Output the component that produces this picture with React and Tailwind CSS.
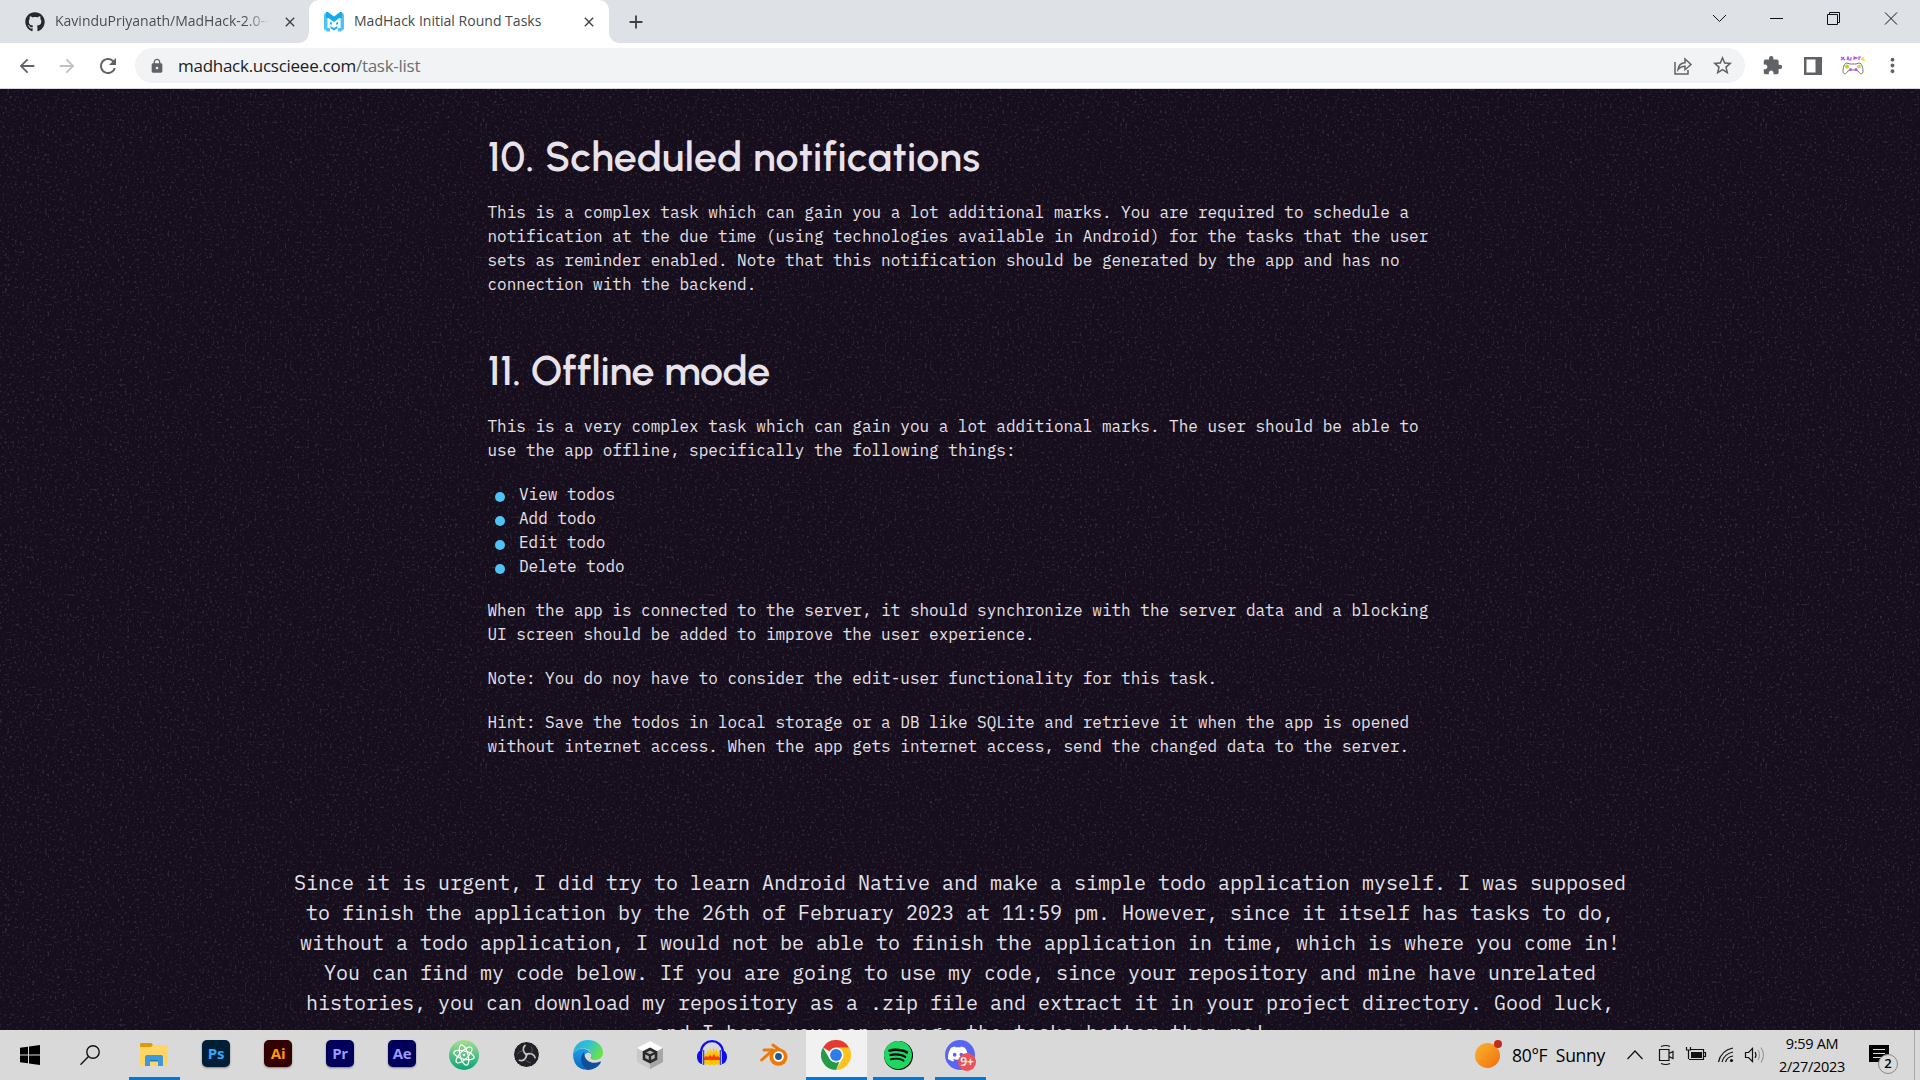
import React from "react";
import { FaGithub } from "react-icons/fa";
import { SiSpotify, SiDiscord } from "react-icons/si";
import { MdArrowBack, MdArrowForward, MdRefresh, MdLock, MdStarBorder, MdExtension, MdMoreVert, MdClose, MdAdd } from "react-icons/md";

const UI = "font-['Open_Sans','Noto_Sans',sans-serif]";

function MadHackLogo() {
  return (
    <svg viewBox="0 0 20 20" className="h-5 w-5 shrink-0">
      <path d="M1 1h4v5H3.500v10H6v3.500H3L0 17V3z" fill="#4fc3f7" />
      <path d="M19 1h-4v5h1.500v10H14v3.500h3l3-2.500V3z" fill="#4fc3f7" />
      <path d="M2 0h2l6 4.500L16 0h2v6h-2.500L10 10 4.500 6H2z" fill="#12aeea" />
      <path d="M6 9.500l2 1.500v1.500H6zM14 9.500L12 11v1.500h2zM6.500 14L10 16l3.500-2v2.200L10 18.500l-3.500-2.300z" fill="#1fb2ee" />
    </svg>
  );
}

function ShareIcon() {
  return (
    <svg viewBox="0 0 20 20" className="h-5 w-5" fill="none" stroke="#5f6368" strokeWidth="1.5">
      <path d="M2 6v12h13v-4" />
      <path d="M5 13.500c.5-4 3-6.500 7-6.700V3l6 5.500-6 5.200v-3.500c-3 0-5 .8-7 3.300z" />
    </svg>
  );
}

function Controller() {
  return (
    <svg viewBox="0 0 26 20" className="h-5 w-[26px]">
      <path d="M1 4l3-3M1 1l4 3M7 4l1-3 1 3h2V1M14 4V1l3 1-3 1M19 4V1h2" stroke="#b44cf0" strokeWidth="1.200" fill="none" />
      <path d="M21 3l2-1v2h2" stroke="#d8e84a" strokeWidth="1.500" fill="none" />
      <path d="M7 7l3 1h6l3-1c3 0 4 5 4 9-1 3-3 2-5-1l-2-1h-6l-2 1c-2 3-4 4-5 1 0-4 1-9 4-9z" fill="#fff" stroke="#777" />
      <circle cx="7" cy="10.500" r="2" fill="#b6d900" />
      <circle cx="19" cy="10.500" r="2" fill="#c8d86a" />
      <circle cx="10.500" cy="13.500" r="1.500" fill="#c94ff0" />
      <circle cx="16" cy="13.500" r="1.500" fill="#c94ff0" />
    </svg>
  );
}

function TabStrip() {
  return (
    <div className={`flex h-[43px] bg-[#dee1e6] ${UI}`}>
      <div className="flex w-[309px] items-center pl-[25px]">
        <FaGithub className="h-5 w-5 shrink-0 text-[#24292f]" />
        <span className="mb-[2px] ml-[10px] w-[215px] overflow-hidden whitespace-nowrap bg-gradient-to-r from-[#45494d] from-88% to-[#dee1e6] bg-clip-text text-[14px] tracking-[0px] text-transparent">KavinduPriyanath/MadHack-2.0--</span>
        <MdClose className="ml-[12px] h-4 w-4 shrink-0 text-[#3c4043]" />
      </div>
      <div className="relative flex w-[300px] items-center rounded-t-[10px] bg-white pl-[15px]">
        <div className="absolute bottom-0 -left-[10px] h-[10px] w-[10px] bg-[radial-gradient(circle_at_0_0,#dee1e6_9.5px,white_10px)]" />
        <div className="absolute bottom-0 -right-[10px] h-[10px] w-[10px] bg-[radial-gradient(circle_at_100%_0,#dee1e6_9.5px,white_10px)]" />
        <MadHackLogo />
        <span className="mb-[2px] ml-[10px] w-[227px] whitespace-nowrap text-[14px] tracking-[0.02px] text-[#45494d]">MadHack Initial Round Tasks</span>
        <MdClose className="h-4 w-4 shrink-0 text-[#3c4043]" />
      </div>
      <div className="flex flex-1 items-center pl-[16px]">
        <MdAdd className="h-[22px] w-[22px] text-[#3c4043]" />
      </div>
      <svg viewBox="0 0 220 43" className="h-[43px] w-[220px]" fill="none" stroke="#111" strokeWidth="1">
        <path d="M13 15l6.500 6.500L26 15" />
        <path d="M70 18.500h13M127.500 14.500h10v10h-10zM129.500 14.500v-2h10v10h-2M185 12.500l12 12M197 12.500l-12 12" />
      </svg>
    </div>
  );
}

function Toolbar() {
  return (
    <div className={`flex h-[46px] items-center border-b border-[#d5d7da] bg-white text-[#5f6368] ${UI}`}>
      <div className="flex w-[135px] items-center gap-[18px] pl-4">
        <MdArrowBack className="h-[22px] w-[22px]" />
        <MdArrowForward className="h-[22px] w-[22px] text-[#bdc1c6]" />
        <MdRefresh className="h-[24px] w-[24px]" />
      </div>
      <div className="flex h-[35px] w-[1610px] items-center rounded-full bg-[#f1f3f4] pl-[14px]">
        <MdLock className="h-4 w-4" />
        <span className="ml-[13px] flex-1 text-[17px] tracking-[-0.27px] text-[#202124]">madhack.ucscieee.com<span className="text-[#6b6f73]">/task-list</span></span>
        <ShareIcon />
        <MdStarBorder className="mr-[11px] ml-[18px] h-[23px] w-[23px]" />
      </div>
      <div className="flex flex-1 items-center pl-[17px]">
        <MdExtension className="h-[21px] w-[21px]" />
        <svg viewBox="0 0 18 18" className="ml-[21px] h-[18px] w-[18px]"><path d="M0 0h18v18H0zM2.500 2.500v13h9v-13z" fill="#5f6368" fillRule="evenodd" /></svg>
        <span className="ml-[18px]"><Controller /></span>
        <MdMoreVert className="ml-[15px] h-[23px] w-[23px]" />
      </div>
    </div>
  );
}

function Noise() {
  return (
    <svg className="pointer-events-none absolute inset-0 h-full w-full opacity-20">
      <filter id="grain">
        <feTurbulence type="fractalNoise" baseFrequency="0.4" numOctaves="3" seed="4" />
        <feColorMatrix values="0 0 0 0 .4  0 0 0 0 .4  0 0 0 0 .45  4 0 0 0 -2.3" />
      </filter>
      <rect width="100%" height="100%" filter="url(#grain)" />
    </svg>
  );
}

const Heading = ({ children, tracking = "tracking-[0.45px]" }) => (
  <h2 className={`h-[48px] whitespace-nowrap font-['Gilroy','Urbanist','Inter',sans-serif] text-[41px] leading-[48px] font-[650] text-[#e8e2ea] ${tracking}`}>{children}</h2>
);

const Lines = ({ rows }) => (
  <p>{rows.map((r) => <span key={r} className="block whitespace-nowrap">{r}</span>)}</p>
);

function Page() {
  return (
    <main className="relative h-[941px] overflow-hidden bg-[#160e1c] font-['IBM_Plex_Mono','Liberation_Mono',monospace] text-[#e6e1e9]">
      <Noise />
      <div className="relative ml-[487.5px] flex w-[945px] flex-col text-[16px] leading-6">
        <div className="mt-[44px]"><Heading>10. Scheduled notifications</Heading></div>
        <div className="mt-[19px]">
          <Lines rows={[
            "This is a complex task which can gain you a lot additional marks. You are required to schedule a",
            "notification at the due time (using technologies available in Android) for the tasks that the user",
            "sets as reminder enabled. Note that this notification should be generated by the app and has no",
            "connection with the backend.",
          ]} />
        </div>
        <div className="mt-[51px]"><Heading tracking="tracking-[-0.1px]">11. Offline mode</Heading></div>
        <div className="mt-[19px] flex flex-col gap-5">
          <Lines rows={[
            "This is a very complex task which can gain you a lot additional marks. The user should be able to",
            "use the app offline, specifically the following things:",
          ]} />
          <ul>
            {["View todos", "Add todo", "Edit todo", "Delete todo"].map((t) => (
              <li key={t} className="flex h-6 items-center pl-[7.5px]">
                <span className="mt-[5px] mr-[14px] h-[10px] w-[10px] rounded-full bg-[#4fc3f7]" />{t}
              </li>
            ))}
          </ul>
          <Lines rows={[
            "When the app is connected to the server, it should synchronize with the server data and a blocking",
            "UI screen should be added to improve the user experience.",
          ]} />
          <Lines rows={["Note: You do noy have to consider the edit-user functionality for this task."]} />
          <Lines rows={[
            "Hint: Save the todos in local storage or a DB like SQLite and retrieve it when the app is opened",
            "without internet access. When the app gets internet access, send the changed data to the server.",
          ]} />
        </div>
      </div>
      <div className="relative mt-[110px] text-center text-[20px] leading-[30px]">
        <Lines rows={[
          "Since it is urgent, I did try to learn Android Native and make a simple todo application myself. I was supposed",
          "to finish the application by the 26th of February 2023 at 11:59 pm. However, since it itself has tasks to do,",
          "without a todo application, I would not be able to finish the application in time, which is where you come in!",
          "You can find my code below. If you are going to use my code, since your repository and mine have unrelated",
          "histories, you can download my repository as a .zip file and extract it in your project directory. Good luck,",
          "and I hope you can manage the tasks better than me!",
        ]} />
      </div>
    </main>
  );
}

const Adobe = ({ label, box, text }) => (
  <div className={`mb-[3px] flex h-[27px] w-[28px] items-center justify-center rounded-[5px] pb-px text-[15px] font-bold tracking-[-0.3px] shadow-[0_1px_2px_rgba(0,0,0,.4)] ${box} ${text}`}>{label}</div>
);

function Explorer() {
  return (
    <svg viewBox="0 0 28 24" className="mb-px h-6 w-7">
      <path d="M0 1.500Q0 0 1.500 0h10L13 2l-1 3H0z" fill="#dd9a06" />
      <path d="M13 2h13q1.500 0 1.500 1.500V22H0V4h11z" fill="#ffd564" />
      <path d="M5 23V14q0-2 2-2h14q2 0 2 2v9h-5v-6h-8v6z" fill="#3f98dc" />
      <path d="M10 17h8v1.500h-8z" fill="#2478bd" />
    </svg>
  );
}

function Atom() {
  return (
    <svg viewBox="0 0 30 30" className="h-[30px] w-[30px]" fill="none" stroke="#fff" strokeWidth="1.200">
      <defs><linearGradient id="at" x1="0" y1="0" x2="0" y2="1"><stop offset="0" stopColor="#aade90" /><stop offset="1" stopColor="#07a477" /></linearGradient></defs>
      <circle cx="15" cy="15" r="15" fill="url(#at)" stroke="none" />
      <ellipse cx="15" cy="15" rx="10.500" ry="4" transform="rotate(15 15 15)" />
      <ellipse cx="15" cy="15" rx="10.500" ry="4" transform="rotate(75 15 15)" />
      <ellipse cx="15" cy="15" rx="10.500" ry="4" transform="rotate(135 15 15)" />
      <circle cx="15" cy="15" r="1.300" fill="#fff" stroke="none" />
    </svg>
  );
}

function Obs() {
  const blade = "M13.500 14C10 11 9 7 12 4.500";
  return (
    <svg viewBox="0 0 27 27" className="mb-px h-[27px] w-[27px]" fill="none" stroke="#c9c9cb" strokeLinecap="round">
      <circle cx="13.500" cy="13.500" r="13" fill="#232125" stroke="#f0f0f0" />
      {["rotate(0 13.5 13.5)", "rotate(120 13.5 13.5)", "rotate(240 13.5 13.5)"].map((r) => (
        <g key={r} transform={r}>
          <path d={blade} strokeWidth="1.700" />
          <path d="M10.500 10C8 9.500 5.500 11 4.500 13" strokeWidth="0.600" stroke="#77757a" />
        </g>
      ))}
    </svg>
  );
}

function Edge() {
  return (
    <svg viewBox="0 0 30 30" className="h-[30px] w-[30px]">
      <defs>
        <linearGradient id="eg1" x1="0" y1="0" x2="1" y2=".4"><stop offset="0" stopColor="#2aa9e0" /><stop offset=".5" stopColor="#2fc0d8" /><stop offset="1" stopColor="#6be04f" /></linearGradient>
        <linearGradient id="eg2" x1="0" y1="0" x2="0" y2="1"><stop offset="0" stopColor="#1f9de3" /><stop offset="1" stopColor="#0b67c0" /></linearGradient>
      </defs>
      <path d="M0 14C1 5 7 0 15 0c9 0 15 6 15 12.500 0 5-4 7.500-8 7.500-3 0-5-1-4.500-2.500C19 16 18.500 10 12 8.500 6 8 2 10 0 14z" fill="url(#eg1)" />
      <path d="M0 14C2 10 7 8 12 9c3.500 1 6 3.500 6.200 5.500-1.200-2-4.500-2.500-6.200 0-3 5 1 12 8 13.500C12 32 0 29 0 14z" fill="url(#eg2)" />
      <path d="M11 12c-4 4-4.500 12 3 17.900C20 30 25 27.500 27.800 22.500c.4-1-.3-1.200-1-.8C19 25 11 21 11 12z" fill="#104f9a" />
    </svg>
  );
}

function Audacity() {
  return (
    <svg viewBox="0 0 30 27" className="h-[27px] w-[30px]">
      <path d="M7 17l1-5 1 3 2-6 1 5 1.500-6 1.500 6 1.500-7 1.500 6 1.500-5 1 5 1-2 1.500 6v6l-2 2-2-1-2 2-2-2-2 2-2-2-2 1-2-2z" fill="#ffc400" />
      <path d="M7 18l2-2 2 1 2-2 2 2 2-3 2 3 2-1 2 2v2H7z" fill="#ff3b00" />
      <path d="M4 12C5-2.500 25-2.500 26 12" fill="none" stroke="#0b10e8" strokeWidth="2.200" />
      <path d="M5 10C1 11 0 14 0 17s2 7 5 7zM25 10c4 1 5 4 5 7s-2 7-5 7z" fill="#0b10e8" />
      <path d="M6.500 10v15M23.500 10v15" stroke="#3949d6" strokeWidth="1.500" />
    </svg>
  );
}

function Chrome() {
  return (
    <svg viewBox="0 0 30 30" className="mr-px h-[30px] w-[30px]">
      <path d="M15 15L2 7.500A15 15 0 0 1 28 7.500z" fill="#e33b2e" />
      <path d="M15 7.500H28A15 15 0 0 1 15 30l6.500-11.200z" fill="#fcc31e" />
      <path d="M2 7.500l6.500 11.200 6.500 3.800 3.500-1L15 30A15 15 0 0 1 2 7.500z" fill="#269a48" />
      <circle cx="15" cy="15" r="7.500" fill="#fff" /><circle cx="15" cy="15" r="5.900" fill="#2b7de9" />
    </svg>
  );
}

function Unity() {
  return (
    <svg viewBox="0 0 26 28" className="h-7 w-[26px]">
      <path d="M13 0l13 7v14l-13 7L0 21V7z" fill="#c9c9c9" />
      <path d="M13 0l13 7-13 7L0 7z" fill="#fff" /><path d="M13 14l13-7v14l-13 7z" fill="#a6a6a6" />
      <path d="M13 8l6 3v7l-6 3-6-3v-7z" fill="#b4b4b4" stroke="#2a2a2a" strokeWidth="2.600" />
      <path d="M13 14.500V21M13 14.500L7 11.500M13 14.500l6-3" stroke="#2a2a2a" strokeWidth="2.400" fill="none" />
    </svg>
  );
}

const Blender = () => (
  <svg viewBox="0 0 28 24" className="h-6 w-7">
    <path d="M1.700 17L13 7H4M13 2l8 6" stroke="#ea7a0b" strokeWidth="3" fill="none" strokeLinecap="round" strokeLinejoin="round" />
    <ellipse cx="18.500" cy="14" rx="9" ry="8.800" fill="#ea7a0b" />
    <circle cx="18.500" cy="13.500" r="5.300" fill="#fff" /><circle cx="18.500" cy="13.500" r="3.400" fill="#265787" />
  </svg>
);

const apps = [
  { id: "explorer", icon: <Explorer />, open: true },
  { id: "ps", icon: <Adobe label="Ps" box="bg-[#001e36]" text="text-[#31a8ff]" /> },
  { id: "ai", icon: <Adobe label="Ai" box="bg-[#330000]" text="text-[#ff9a00]" /> },
  { id: "pr", icon: <Adobe label="Pr" box="bg-[#00005b]" text="text-[#9999ff]" /> },
  { id: "ae", icon: <Adobe label="Ae" box="bg-[#00005b]" text="text-[#9999ff]" /> },
  { id: "atom", icon: <Atom /> },
  { id: "obs", icon: <Obs /> },
  { id: "edge", icon: <Edge /> },
  { id: "unity", icon: <Unity /> },
  { id: "audacity", icon: <div className="mb-[3px]"><Audacity /></div> },
  { id: "blender", icon: <Blender /> },
  { id: "chrome", icon: <Chrome />, open: true, active: true },
  { id: "spotify", icon: <div className="rounded-full bg-black p-[0.5px]"><SiSpotify className="h-7 w-7 text-[#1ed760]" /></div>, open: true },
  { id: "discord", icon: (
    <div className="relative flex h-[30px] w-[30px] items-center justify-center rounded-full bg-[#5865f2]">
      <SiDiscord className="mr-1 mb-[3px] h-5 w-5 text-white" />
      <span className="absolute -right-px -bottom-px flex h-[18px] w-[18px] items-center justify-center rounded-full bg-[#ed5259] text-[12px] font-semibold text-white">9+</span>
    </div>), open: true },
];

function Tray() {
  return (
    <svg viewBox="0 0 156 40" className="h-10 w-[156px]" fill="none" stroke="#111" strokeWidth="1.200">
      <path d="M7.500 24l7.500-8 7.500 8" />
      <path d="M39.500 14.500h9.500v11h-9.500zM49 18.500l4-2v7l-4-2M41 11.500q5-2 9 0M41 28.500q5 2 9 0" />
      <path d="M71 14.500h12.500v10H69M84 17.500h1.500v4H84M66.500 12v3h4v-3M68.500 15v9" />
      <rect x="71" y="17" width="11" height="6" fill="#111" stroke="none" />
      <path d="M98.500 27Q101 15.500 113 13M102 27Q104 19 113 17M105.500 27Q107 22 113 21" />
      <circle cx="111.500" cy="25.500" r="1.600" fill="#111" stroke="none" />
      <path d="M125.500 17.500h3l4-4v13l-4-4h-3z M135 17q2 3 0 6" />
      <path d="M138 15q3 5 0 10M141 12.500q5 7.500 0 15" stroke="#999" />
    </svg>
  );
}

function Taskbar() {
  return (
    <footer className={`relative flex h-[50px] items-stretch bg-[#d9d9d9] text-black ${UI}`}>
      <div className="flex w-[60px] items-center justify-center">
        <svg viewBox="0 0 20 20" className="h-5 w-5"><path d="M0 2.800l8-1.100v7.800H0zM9 1.600L20 0v9.500H9zM0 10.500h8v7.800l-8-1.100zM9 10.500h11V20L9 18.400z" /></svg>
      </div>
      <div className="mr-[3px] flex w-[60px] items-center justify-center">
        <svg viewBox="0 0 20 20" className="h-5 w-5" fill="none" stroke="#111" strokeWidth="1.400"><circle cx="13" cy="7" r="6.200" /><path d="M8.500 11.500L.5 19.700" /></svg>
      </div>
      {apps.map((a) => (
        <div key={a.id} className={a.active ? "relative ml-px flex w-[61px] items-center justify-center bg-[#f1f1f1]" : "relative flex w-[62px] items-center justify-center"}>
          {a.icon}
          {a.open && <div className={a.active ? "absolute inset-x-0 bottom-0 h-[3px] bg-[#0078d7]" : "absolute bottom-0 left-[6px] h-[3px] w-[51px] bg-[#0078d7]"} />}
        </div>
      ))}
      <div className="flex flex-1 items-center justify-end">
        <div className="relative mr-[12px] h-[25px] w-[25px] rounded-full bg-gradient-to-br from-[#f5b52c] to-[#f56a0b]">
          <span className="absolute -top-[3px] -right-[2px] h-[8px] w-[8px] rounded-full bg-[#c42b1c]" />
        </div>
        <span className="w-[108px] pt-px text-[17.500px] tracking-[-0.3px] whitespace-pre">80°F  Sunny</span>
        <Tray />
        <div className="w-[72px] text-center text-[14.500px] leading-[23px] tracking-[-0.300px] whitespace-nowrap">
          <div>9:59 AM</div><div>2/27/2023</div>
        </div>
        <div className="relative mr-[11px] ml-[21px] h-[32px] w-[34px]">
          <svg viewBox="0 0 34 32" className="h-8 w-[34px]"><path d="M0 6h20v17H13l-3 2v-2H0z" fill="#000" /><path d="M4 10.500h12M4 14.500h12M4 18.500h8" stroke="#ddd" strokeWidth="1.200" /></svg>
          <span className="absolute top-[15px] left-[9px] flex h-5 w-5 items-center justify-center rounded-full border border-[#888] bg-[#d9d9d9] text-[13px] font-semibold">2</span>
        </div>
        <div className="mr-[5px] h-[50px] w-px bg-[#a8a8a8]" />
      </div>
    </footer>
  );
}

export default function App() {
  return (
    <div className="flex h-[1080px] w-[1920px] flex-col overflow-hidden">
      <TabStrip />
      <Toolbar />
      <Page />
      <Taskbar />
    </div>
  );
}
